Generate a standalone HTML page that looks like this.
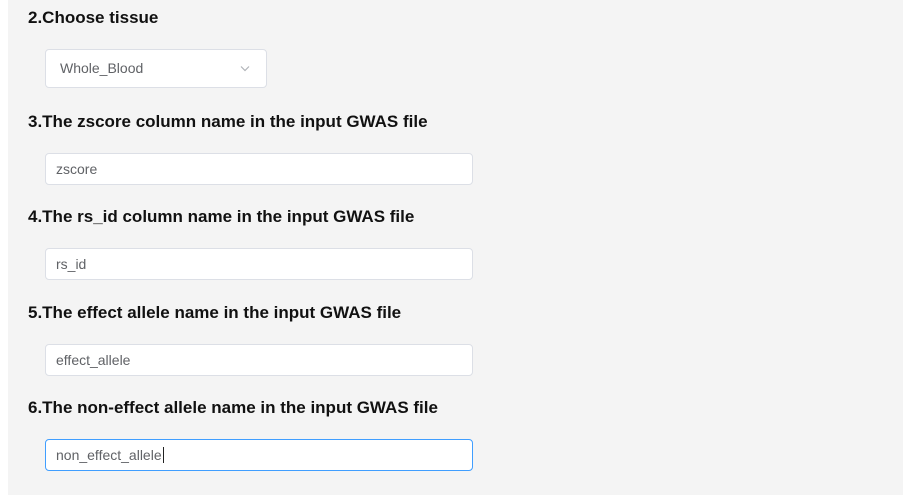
<!DOCTYPE html>
<html><head><style>
html,body{margin:0;padding:0;width:910px;height:495px;background:#fff;overflow:hidden;font-family:"Liberation Sans",sans-serif}
.bg{position:absolute;left:8px;top:0;width:895px;height:495px;background:#f4f4f4}
.h{position:absolute;left:28px;font-weight:bold;font-size:17px;color:#111;line-height:20px;white-space:nowrap}
.in{position:absolute;left:45px;width:426px;height:30px;background:#fff;border:1px solid #dcdfe6;border-radius:4px;font-size:14px;color:#606266;line-height:30px;box-sizing:content-box}
.in span{position:absolute;left:10px}
</style></head><body>
<div class="bg"></div>
<div class="h" style="top:8px">2.Choose tissue</div>
<div class="in" style="top:49px;width:220px;height:37px;line-height:37px"><span style="left:14px">Whole_Blood</span>
<svg style="position:absolute;left:194px;top:15px" width="10" height="7" viewBox="0 0 10 7"><path d="M1 1.5L5 5.5L9 1.5" fill="none" stroke="#b0b3b8" stroke-width="1.2"/></svg></div>
<div class="h" style="top:112px">3.The zscore column name in the input GWAS file</div>
<div class="in" style="top:153px"><span>zscore</span></div>
<div class="h" style="top:207px">4.The rs_id column name in the input GWAS file</div>
<div class="in" style="top:248px"><span>rs_id</span></div>
<div class="h" style="top:303px">5.The effect allele name in the input GWAS file</div>
<div class="in" style="top:344px"><span>effect_allele</span></div>
<div class="h" style="top:398px">6.The non-effect allele name in the input GWAS file</div>
<div class="in" style="top:439px;border-color:#409eff"><span>non_effect_allele<span style="position:static;border-left:1px solid #222;margin-left:1px"></span></span></div>
</body></html>
